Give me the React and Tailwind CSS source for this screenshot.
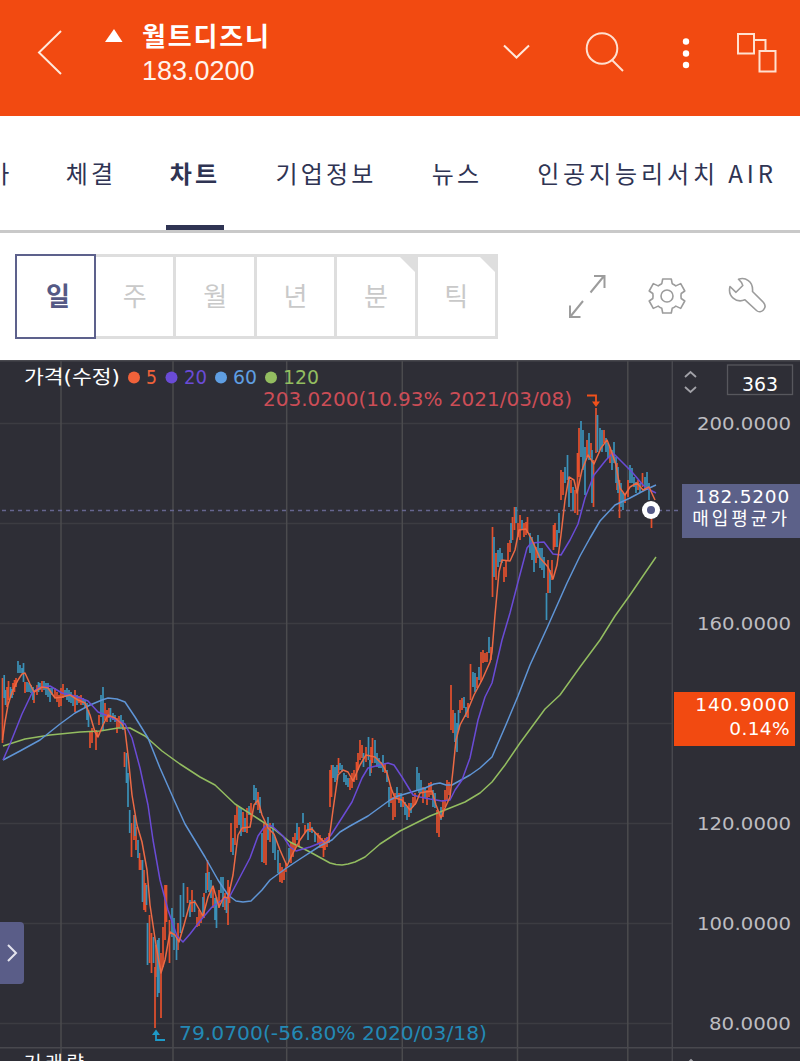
import React from 'react';
import clsx from 'clsx';

const tabs = ['체결', '차트', '기업정보', '뉴스', '인공지능리서치 AIR'];
const tabStyles = [
  'ml-[54px] w-[52px] tracking-[3.200px]',
  'ml-[49px] w-[58px] tracking-[3.200px]',
  'ml-[51px] w-[102px] tracking-[3.200px]',
  'ml-[54px] w-[52px] tracking-[3.200px]',
  'ml-[51px] w-[246px] tracking-[3.900px]',
];

const periods = [
  { label: '일', active: true },
  { label: '주' },
  { label: '월' },
  { label: '년' },
  { label: '분', corner: true },
  { label: '틱', corner: true },
];

// [x, high, low]
const upCandles = [
  [2.5, 678, 743], [7, 687, 707], [8.5, 681, 700], [13, 683, 695], [14.5, 680, 692], [16, 678, 687],
  [25, 682, 693], [34, 690, 703], [37, 685, 695], [42, 681, 692], [55, 688, 698], [57, 692, 702],
  [59, 695, 707], [61, 688, 706], [63, 684, 698], [75, 690, 712], [79, 696, 703], [81, 695, 705],
  [90, 732, 748], [92, 728, 743], [96, 730, 750], [97.5, 732, 737], [99, 715, 725], [105, 703, 720],
  [107, 710, 722], [109, 708, 718], [117, 718, 733], [119, 716, 728], [124.5, 752, 767], [131.5, 823, 857],
  [134, 815, 840], [136, 827, 850], [139.5, 853, 870], [141, 860, 870], [144, 870, 910], [145.5, 883, 912],
  [149.5, 915, 963], [151.5, 933, 973], [155, 967, 1028], [156, 945, 977], [161, 953, 1018], [163, 927, 967],
  [165, 885, 940], [166.5, 885, 922], [169.5, 920, 963], [178, 923, 950], [187.5, 887, 903], [192, 890, 912],
  [197, 917, 927], [199, 910, 926], [201, 913, 923], [204, 893, 918], [207.5, 860, 890], [213, 886, 908],
  [219, 890, 908], [225, 893, 910], [228, 880, 925], [229.5, 887, 903], [231, 823, 852], [235, 815, 845],
  [237, 806, 828], [243, 812, 832], [247, 808, 833], [251, 803, 820], [258, 792, 810], [264, 823, 863],
  [266, 827, 865], [270, 823, 842], [280, 863, 882], [282, 867, 883], [284, 870, 880], [286, 863, 872],
  [291, 843, 863], [293, 837, 857], [295, 833, 850], [299, 827, 847], [305, 825, 833], [310, 822, 832],
  [318, 833, 843], [320, 835, 848], [322, 838, 848], [323.5, 840, 857], [325, 838, 850], [327, 837, 847],
  [329, 833, 843], [330, 770, 807], [331.5, 765, 797], [338.5, 758, 773], [350, 778, 790], [352, 773, 788],
  [354, 770, 782], [356.5, 762, 780], [358, 753, 770], [360, 740, 760], [362, 745, 758], [366, 747, 762],
  [371, 747, 773], [372.5, 738, 763], [385, 763, 773], [391, 787, 803], [393, 797, 820], [395, 793, 817],
  [399, 793, 803], [403, 797, 807], [409, 803, 817], [413, 797, 807], [415, 793, 805], [423, 787, 803],
  [427, 790, 805], [429, 783, 797], [431, 782, 795], [437, 810, 833], [439, 813, 837], [443, 800, 817],
  [445, 790, 807], [447, 780, 800], [449, 782, 795], [451, 685, 730], [453, 710, 733], [460, 700, 713],
  [462, 698, 710], [468, 703, 718], [470.5, 664, 700], [477, 677, 688], [481, 652, 682], [483, 650, 663],
  [485, 653, 662], [487, 652, 662], [491, 647, 660], [492.5, 527, 597], [496, 553, 580], [504, 567, 582],
  [506, 560, 577], [508, 543, 560], [510, 540, 552], [512.5, 517, 540], [514.5, 507, 530], [518, 523, 537],
  [520, 515, 540], [524, 523, 537], [526, 522, 535], [527.5, 517, 533], [536, 547, 563], [548, 560, 593],
  [552, 560, 580], [553.5, 525, 550], [555, 523, 547], [561, 470, 500], [563, 472, 495], [571, 480, 493],
  [575, 490, 513], [577.5, 453, 515], [579, 428, 477], [587, 440, 457], [591, 443, 457], [593.5, 460, 507],
  [596, 408, 453], [604, 430, 443], [610, 447, 463], [617, 463, 490], [619.5, 480, 518], [625, 495, 503],
  [628, 480, 497], [638, 480, 490], [642.5, 473, 487], [651.5, 515, 528],
];

const downCandles = [
  [4.2, 675, 698], [5.5, 690, 705], [10.5, 687, 697], [12, 689, 698], [18, 661, 673], [20, 665, 673],
  [22, 668, 673], [23.5, 663, 682], [27, 682, 692], [29, 683, 692], [31, 685, 693], [33, 687, 700],
  [38.5, 682, 692], [40, 683, 690], [44, 681, 690], [46, 683, 695], [48, 683, 697], [50, 688, 702],
  [52, 688, 695], [65, 690, 697], [67, 688, 700], [69, 690, 702], [71, 692, 703], [73, 695, 706],
  [77, 695, 705], [83, 698, 705], [85, 700, 708], [87, 703, 720], [88.5, 710, 727], [101, 695, 717],
  [103, 687, 730], [110.5, 708, 722], [113, 713, 720], [115, 715, 722], [121, 715, 727], [123, 720, 730],
  [126.5, 753, 783], [128, 773, 807], [129.7, 810, 833], [135, 815, 836], [138, 840, 858], [142.5, 860, 902],
  [146.5, 885, 905], [147.5, 923, 965], [153.5, 937, 963], [157.5, 940, 997], [159, 938, 993], [172, 908, 937],
  [174, 918, 950], [176.5, 937, 960], [180.5, 895, 933], [183.5, 883, 917], [190, 900, 917], [194.5, 900, 912],
  [203, 897, 917], [206, 873, 893], [209, 872, 892], [211, 880, 898], [215, 898, 920], [216.5, 897, 928],
  [221, 877, 893], [223, 877, 907], [226.5, 898, 913], [233, 838, 855], [239, 806, 825], [241, 808, 836],
  [245, 818, 832], [249, 806, 815], [254, 785, 800], [256, 788, 805], [260, 797, 813], [262, 833, 862],
  [268, 817, 840], [273, 823, 853], [275, 837, 860], [278, 850, 873], [289, 848, 862], [297, 823, 840],
  [303, 813, 823], [308, 823, 840], [312, 827, 833], [315, 832, 842], [333, 765, 778], [335, 767, 782],
  [337, 765, 780], [340, 763, 770], [342, 765, 772], [344, 773, 782], [346, 775, 785], [348, 778, 787],
  [363.5, 753, 767], [368.5, 737, 760], [370, 760, 776], [375, 740, 763], [377, 753, 767], [379, 758, 768],
  [381, 762, 768], [383, 755, 772], [387, 770, 782], [389, 787, 807], [397, 787, 798], [401, 793, 807],
  [405, 802, 815], [407, 807, 820], [411, 803, 813], [417, 767, 790], [419, 773, 793], [421, 780, 793],
  [425, 787, 798], [433, 790, 807], [435, 793, 808], [441, 807, 820], [455, 713, 742], [457, 723, 752],
  [458.5, 710, 730], [464, 697, 708], [466, 707, 717], [473, 672, 687], [475, 673, 692], [479, 667, 680],
  [489, 637, 653], [494, 537, 577], [498, 550, 567], [500, 548, 562], [502, 553, 563], [511, 523, 543],
  [516, 507, 523], [522, 520, 530], [530, 533, 553], [532, 537, 560], [534, 543, 572], [538, 535, 558],
  [540, 548, 568], [542, 548, 570], [544, 557, 578], [546.5, 593, 620], [550, 570, 593], [557, 530, 547],
  [559, 513, 533], [565, 467, 483], [567.5, 455, 480], [569, 477, 507], [573, 487, 510], [581, 421, 457],
  [583, 430, 470], [585, 447, 495], [589, 433, 460], [592, 450, 503], [597.5, 415, 452], [600, 428, 450],
  [602, 430, 452], [606, 438, 452], [608, 443, 458], [612, 450, 470], [614, 442, 463], [616, 457, 483],
  [618, 467, 493], [621, 483, 507], [623, 493, 510], [630, 465, 483], [632, 468, 483], [634, 477, 487],
  [636, 482, 493], [640, 483, 492], [645, 477, 490], [647, 472, 490], [649, 483, 500],
];

const movingAverages = [
  {
    color: '#93bd60',
    points:
      '3,746 25,739 50,735 80,732 100,731 118,728 130,728 145,736 162,751 180,764 200,777 215,785 235,804 260,820 275,830 290,842 310,852 330,863 336,864.5 342,865 348,864 355,862 365,857 380,844 400,831 430,816 450,808 465,802 480,793 492,782 505,765 520,743 545,709 560,695 580,667 600,640 615,616 630,595 645,573 656,557',
  },
  {
    color: '#5f95d6',
    points:
      '3,760 20,751 40,740 60,724 75,713 90,705 102,700 108,698 117,699 125,702 135,717 148,738 160,768 175,802 185,824 205,857 218,880 228,895 236,901 243,902 251,901 262,890 270,880 285,869 300,859 320,846 332,840 340,832 350,826 368,816 390,800 398,796 405,794 425,788 434,784 440,783 446,785 452,785 470,775 480,768 492,757 505,727 518,696 530,665 547,628 567,583 580,556 590,538 600,521 615,505 630,498 645,490 656,485',
  },
  {
    color: '#6a4bd6',
    points:
      '3,760 10,744 22,714 32,693 38,688 50,686 62,693 75,696 88,701 98,712 108,716 125,724 132,738 140,768 148,805 153,840 160,880 168,910 177,936 183,942 190,934 200,921 212,907 222,900 230,896 240,877 250,858 258,836 265,826 272,826 283,836 290,847 296,851 310,847 325,841 331,835 345,813 352,802 362,778 368,768 380,765 388,763 394,765 402,777 413,795 420,797 430,799 442,801 450,800 455,790 462,780 470,758 478,720 485,697 492,683 502,640 510,613 518,582 527,548 531,543 544,542 553,554 561,555 570,540 578,524 585,498 594,475 606,460 613,453 620,460 632,472 643,485 650,490 656,493',
  },
  {
    color: '#ec6a45',
    points:
      '2.5,740 5,722 8,705 12,692 18,680 22,674 25,673 30,684 34,692 42,687 48,688 55,698 62,697 70,695 78,700 85,703 90,715 95,732 98,737 103,725 108,715 115,718 122,724 125,730 128,755 132,795 137,825 142,842 147,870 150,905 156,945 161,973 165,960 170,932 175,935 179,942 184,925 190,903 195,902 203,916 208,897 213,886 219,907 224,897 228,898 233,875 238,835 242,828 250,827 254,805 258,800 262,815 268,828 274,834 280,850 287,866 292,855 300,840 307,830 312,829 320,838 325,843 329,840 333,810 338,775 343,770 348,772 353,781 360,765 366,755 375,757 382,764 387,773 391,788 395,798 402,800 410,810 416,803 420,793 425,792 432,791 436,805 441,818 445,808 450,797 453,770 456,740 460,725 467,712 474,695 482,680 490,662 492,652 495,615 499,572 502,560 510,561 515,550 519,530 526,529 532,540 540,558 548,567 553,579 557,565 561,535 565,500 569,477 574,480 577,493 582,470 588,455 594,464 601,448 607,440 611,450 616,465 620,488 625,495 630,487 637,483 643,490 649,487 655,500',
  },
];

const legend = [
  { period: '5', dot: 134, x: 146, width: 11, color: '#f0623a' },
  { period: '20', dot: 171.5, x: 184, width: 23, color: '#6a4bd6' },
  { period: '60', dot: 221, x: 233, width: 24, color: '#5f9ee2' },
  { period: '120', dot: 271, x: 283, width: 36, color: '#93bd60' },
];

const axisLabels = [
  { y: 423, text: '200.0000' },
  { y: 623, text: '160.0000' },
  { y: 823, text: '120.0000' },
  { y: 923, text: '100.0000' },
  { y: 1023, text: '80.0000' },
];

const toPath = (candles) => candles.map(([x, high, low]) => `M${x} ${high}V${low}`).join('');

const Header = () => (
  <header className="flex h-[116px] bg-[#f24a11] text-white">
    <svg className="mt-[28px] ml-[36px] h-[50px] w-[28px]" viewBox="0 0 28 50" fill="none" stroke="#ffe9dc" strokeWidth="2">
      <path d="M25 3 3 24.500 25 46" />
    </svg>
    <svg className="mt-[28px] ml-[40px] h-[15px] w-[20px]" viewBox="0 0 20 15" fill="white">
      <path d="M10 1 18.500 14H1Z" />
    </svg>
    <div className="ml-[18px] w-[338px]">
      <h1 className="mt-[17px] h-[37px] text-[26px] leading-[36px] font-bold tracking-[1.800px]">월트디즈니</h1>
      <p className="font-['Liberation_Sans'] text-[27px] leading-[34px] text-[#fff3ec]">183.0200</p>
    </div>
    <svg className="mt-[40px] ml-[21px] h-[22px] w-[30px]" viewBox="0 0 30 22" fill="none" stroke="#ffe9dc" strokeWidth="2">
      <path d="m3 5.500 12.500 12 12.500-12" />
    </svg>
    <svg className="mt-[30px] ml-[53px] h-[44px] w-[42px]" viewBox="0 0 42 44" fill="none" stroke="#ffe0d0" strokeWidth="2">
      <circle cx="18" cy="18.500" r="15.300" />
      <path d="m28 30 11 11" />
    </svg>
    <svg className="mt-[34px] ml-[54px] h-[38px] w-[12px]" viewBox="0 0 12 38" fill="white">
      <circle cx="6" cy="7.500" r="3.200" />
      <circle cx="6" cy="19.500" r="3.200" />
      <circle cx="6" cy="31" r="3.200" />
    </svg>
    <svg className="mt-[30px] ml-[43px] h-[44px] w-[44px]" viewBox="0 0 44 44" fill="none" stroke="#ffe0d0" strokeWidth="2">
      <path d="M3 4h16v19.500H3zM24.500 21h16v20.500h-16zM19 10h11.500v11" />
    </svg>
  </header>
);

const TabBar = () => (
  <nav className="flex h-[117px] border-b-[3px] border-[#c9c9c9] text-[24px] leading-[114px] whitespace-nowrap text-[#2f3453]">
    <span className="-ml-[62px] w-[73px] tracking-[2.500px]">현재가</span>
    {tabs.map((tab, i) => (
      <button
        key={tab}
        className={clsx(
          'h-[114px] shrink-0 border-b-[5px] text-center',
          tabStyles[i],
          tab === '차트' ? 'border-[#2f3453] font-bold' : 'border-transparent'
        )}
      >
        {tab}
      </button>
    ))}
  </nav>
);

const Toolbar = () => (
  <div className="flex h-[127px] pt-[21px] pl-[15px] text-[#999]">
    <div className="flex h-[85px] w-[483px]">
      {periods.map(({ label, active, corner }) => (
        <button
          key={label}
          className={clsx(
            'relative flex items-center justify-center pb-[5px] text-[26px]',
            active
              ? 'w-[81px] border-2 border-[#5d618c] pl-[5px] font-bold text-[#555985]'
              : 'flex-1 border-y-[3px] border-r-[3px] border-[#dedede] text-[#c9c9c9]'
          )}
        >
          {label}
          {corner && (
            <svg className="absolute top-0 right-0 h-[15px] w-[15px]" viewBox="0 0 16 16" fill="#dedede">
              <path d="M0 0h16v16Z" />
            </svg>
          )}
        </button>
      ))}
    </div>
    <svg className="mt-[18px] ml-[68px] h-[48px] w-[42px]" viewBox="0 0 42 48" fill="none" stroke="#9c9c9c" strokeWidth="2">
      <path d="M24.500 20.500 38 4M28 4h10.500v12M17 29 4 45M4 33.500V45h10.500" />
    </svg>
    <svg className="mt-[22px] ml-[39px] h-[40px] w-[40px]" viewBox="-20 -20 40 40" fill="none" stroke="#9c9c9c" strokeWidth="1.600" strokeLinejoin="round">
      <path d="M-4.300-17h8.600l.9 4.700q2 .8 3.600 2.200l4.900-2.300 4.100 7.400-3.600 2.500q-.5 2.500 0 5l3.600 2.500-4.100 7.400-4.900-2.300q-1.600 1.400-3.600 2.200l-.9 4.700h-8.600l-.9-4.700q-2-.8-3.600-2.200l-4.900 2.300-4.100-7.400 3.600-2.500q.5-2.500 0-5l-3.600-2.500 4.100-7.400 4.900 2.300q1.600-1.400 3.600-2.200z" />
      <circle r="6" />
    </svg>
    <svg className="mt-[22px] ml-[40px] h-[40px] w-[40px]" viewBox="0 0 40 40" fill="none" stroke="#9c9c9c" strokeWidth="1.600" strokeLinejoin="round">
      <path d="M11.500 3.300C18 .8 26.500 5 25.500 15.500L36.500 26.500C41 32 34 38.500 29.500 34.500L18 23.800C9 27.500.5 20 3 10.500L9 16.300 15.800 9.500 14.500 6.500Z" />
    </svg>
  </div>
);

const Chart = () => (
  <svg className="block h-[701px] w-[800px] font-['DejaVu_Sans','Noto_Sans_CJK_KR',sans-serif]" viewBox="0 360 800 701" fill="none">
    <g stroke="#3c3c42" strokeWidth="1.500">
      <path d="M0 423.500H672M0 523.500H672M0 623.500H672M0 723.500H672M0 823.500H672M0 923.500H672M0 1023.500H672" />
    </g>
    <g stroke="#4b4b4e" strokeWidth="1.500">
      <path d="M61 360V1061M173 360V1061M286.700 360V1061M402.300 360V1061M517.500 360V1061M627.800 360V1061" />
      <path d="M672.300 360V1061M0 1047.700H800M0 360.700H800" stroke="#48484e" />
    </g>
    <path d="M2 510.500H682" stroke="#66668f" strokeWidth="1.300" strokeDasharray="4 4" />

    <path d={toPath(upCandles)} stroke="#e4502d" strokeWidth="1.700" />
    <path d={toPath(downCandles)} stroke="#3b91b8" strokeWidth="1.700" />
    {movingAverages.map(({ color, points }) => (
      <polyline key={color} points={points} stroke={color} strokeWidth="1.500" strokeLinejoin="round" />
    ))}

    {/* average buy marker */}
    <circle cx="651" cy="510" r="9" fill="white" />
    <circle cx="651" cy="510" r="4" fill="#565b88" />

    <text x="24" y="384" fill="white" fontSize="19" textLength="96" lengthAdjust="spacingAndGlyphs">가격(수정)</text>
    {legend.map(({ period, dot, x, width, color }) => (
      <g key={period} fill={color}>
        <circle cx={dot} cy="377.500" r="6" />
        <text x={x} y="384" fontSize="19" textLength={width} lengthAdjust="spacingAndGlyphs">{period}</text>
      </g>
    ))}

    <text x="263" y="405.500" fill="#cc4d56" fontSize="19" textLength="309" lengthAdjust="spacingAndGlyphs">203.0200(10.93% 2021/03/08)</text>
    <path d="M587 395.500H596V402" stroke="#f2511b" strokeWidth="1.800" />
    <path d="M592 401.500H600L596 407Z" fill="#f2511b" />

    <text x="179" y="1039.500" fill="#2389b5" fontSize="19" textLength="308" lengthAdjust="spacingAndGlyphs">79.0700(-56.80% 2020/03/18)</text>
    <path d="M156 1034V1040H165" stroke="#1e9ac8" strokeWidth="1.800" />
    <path d="M152 1035H160L156 1029.500Z" fill="#1e9ac8" />

    <path d="m685 377 5.500-5 5.500 5M685 387l5.500 5 5.500-5" stroke="#a2a2a8" strokeWidth="1.800" />
    <rect x="727.500" y="365" width="65" height="29.500" stroke="#57575d" strokeWidth="1.300" />
    <text x="742" y="390.500" fill="white" fontSize="19" textLength="36" lengthAdjust="spacingAndGlyphs">363</text>

    {axisLabels.map(({ y, text }) => (
      <text
        key={y}
        x={text.length === 8 ? 697 : 709}
        y={y + 6.5}
        fill="#bdbdc1"
        fontSize="18.5"
        textLength={text.length === 8 ? 94 : 82}
        lengthAdjust="spacingAndGlyphs"
      >
        {text}
      </text>
    ))}

    <text x="24" y="1070" fill="white" fontSize="19" textLength="60">거래량</text>
    <path d="m686 1065 5-5 5 5" stroke="#a2a2a8" strokeWidth="1.800" />
  </svg>
);

const App = () => {
  return (
    <div className="h-[1061px] w-[800px] overflow-hidden bg-white font-['Noto_Sans_CJK_KR',sans-serif]">
      <Header />
      <TabBar />
      <Toolbar />
      <main className="relative bg-[#2e2e36]">
        <Chart />
        <div className="absolute top-[124px] right-0 h-[54px] w-[118px] bg-[#5c6189] pr-[10px] text-right text-white">
          <p className="font-['DejaVu_Sans'] text-[18.500px] leading-[25px] tracking-[0.800px]">182.5200</p>
          <p className="text-[18px] leading-[17px] tracking-[3px]">매입평균가</p>
        </div>
        <div className="absolute top-[332px] right-[5px] h-[54px] w-[121px] bg-[#f24a11] pt-px pr-[5px] text-right font-['DejaVu_Sans'] text-[18.500px] text-white">
          <p className="leading-[24px] tracking-[0.800px]">140.9000</p>
          <p className="leading-[23px] tracking-[0.400px]">0.14%</p>
        </div>
        <button className="absolute top-[562px] left-0 flex h-[62px] w-[24px] items-center justify-center rounded-r bg-[#5a5d88]">
          <svg className="h-[18px] w-[12px]" viewBox="0 0 12 18" fill="none" stroke="#e4e4ee" strokeWidth="2">
            <path d="m2 1 8 8-8 8" />
          </svg>
        </button>
      </main>
    </div>
  );
};

export default App;
